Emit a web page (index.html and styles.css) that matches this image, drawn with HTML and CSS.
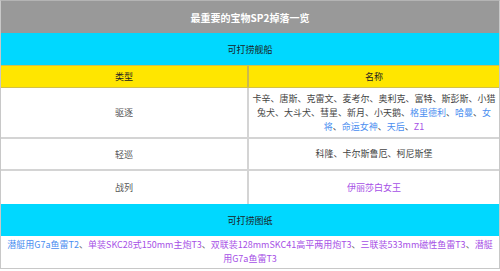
FILE: index.html
```html
<!DOCTYPE html>
<html lang="zh-CN">
<head>
<meta charset="utf-8">
<title>最重要的宝物SP2掉落一览</title>
<link rel="stylesheet" href="styles.css">
</head>
<body>
<div class="sheet">
  <div class="title">最重要的宝物SP2掉落一览</div>
  <div class="section">可打捞舰船</div>
  <div class="row head">
    <div class="cell">类型</div>
    <div class="cell">名称</div>
  </div>
  <div class="row r-dd">
    <div class="cell">驱逐</div>
    <div class="cell names"><p class="txt">卡辛、唐斯、克雷文、麦考尔、奥利克、富特、斯彭斯、小猎兔犬、大斗犬、彗星、新月、小天鹅、<span class="blue">格里德利</span>、<span class="blue">哈曼</span>、<span class="blue">女将</span>、<span class="blue">命运女神</span>、<span class="blue">天后</span>、<span class="purple">Z1</span></p></div>
  </div>
  <div class="row r-cl">
    <div class="cell">轻巡</div>
    <div class="cell names"><p class="txt">科隆、卡尔斯鲁厄、柯尼斯堡</p></div>
  </div>
  <div class="row r-bb">
    <div class="cell">战列</div>
    <div class="cell names"><p class="txt"><span class="purple">伊丽莎白女王</span></p></div>
  </div>
  <div class="section">可打捞图纸</div>
  <div class="plans"><p class="txt"><span class="blue">潜艇用G7a鱼雷T2</span>、<span class="purple">单装SKC28式150mm主炮T3</span>、<span class="purple">双联装128mmSKC41高平两用炮T3</span>、<span class="purple">三联装533mm磁性鱼雷T3</span>、<span class="purple">潜艇用G7a鱼雷T3</span></p></div>
</div>
</body>
</html>
```

FILE: styles.css
```css
html, body {
  margin: 0;
  padding: 0;
  background: #ffffff;
}

body {
  font-family: "Noto Sans CJK SC", "Noto Sans", sans-serif;
  font-size: 9px;
  color: #444444;
}

.sheet {
  width: 500px;
  box-sizing: border-box;
  border: 1px solid #c8c8c8;
  border-top-color: #b4b4b4;
}

.title {
  height: 32px;
  background: #999999;
  color: #ffffff;
  font-weight: bold;
  font-size: 10px;
  display: flex;
  align-items: center;
  justify-content: center;
}

.section {
  height: 32px;
  background: #00d8ff;
  color: #1a1a1a;
  display: flex;
  align-items: center;
  justify-content: center;
}

.row {
  display: grid;
  grid-template-columns: 248px 1fr;
  border-bottom: 2px solid #d4d4d4;
}

.row .cell {
  display: flex;
  align-items: center;
  justify-content: center;
  text-align: center;
}

.row .cell:first-child {
  border-right: 2px solid #d4d4d4;
  color: #555555;
}

.txt {
  margin: 0;
  text-align: center;
}

.head {
  height: 23px;
  background: #ffe600;
  border-bottom: 1px solid #d2c04a;
  border-top: 1px solid #d2c04a;
  box-sizing: border-box;
}

.head .cell {
  color: #222222;
}

.head .cell:first-child {
  border-right-color: #cbb94e;
  color: #222222;
}

.names {
  line-height: 14px;
  padding: 2px 1px;
}

.r-dd { height: 51px; box-sizing: border-box; }
.r-cl { height: 32px; box-sizing: border-box; }
.r-bb { height: 33px; box-sizing: border-box; border-bottom: none; }

.plans {
  height: 32px;
  box-sizing: border-box;
  padding: 2px 2px;
  line-height: 14px;
  color: #666666;
  display: flex;
  align-items: center;
  justify-content: center;
}

.blue {
  color: #4a8ef0;
}

.purple {
  color: #a64fe6;
}
```
